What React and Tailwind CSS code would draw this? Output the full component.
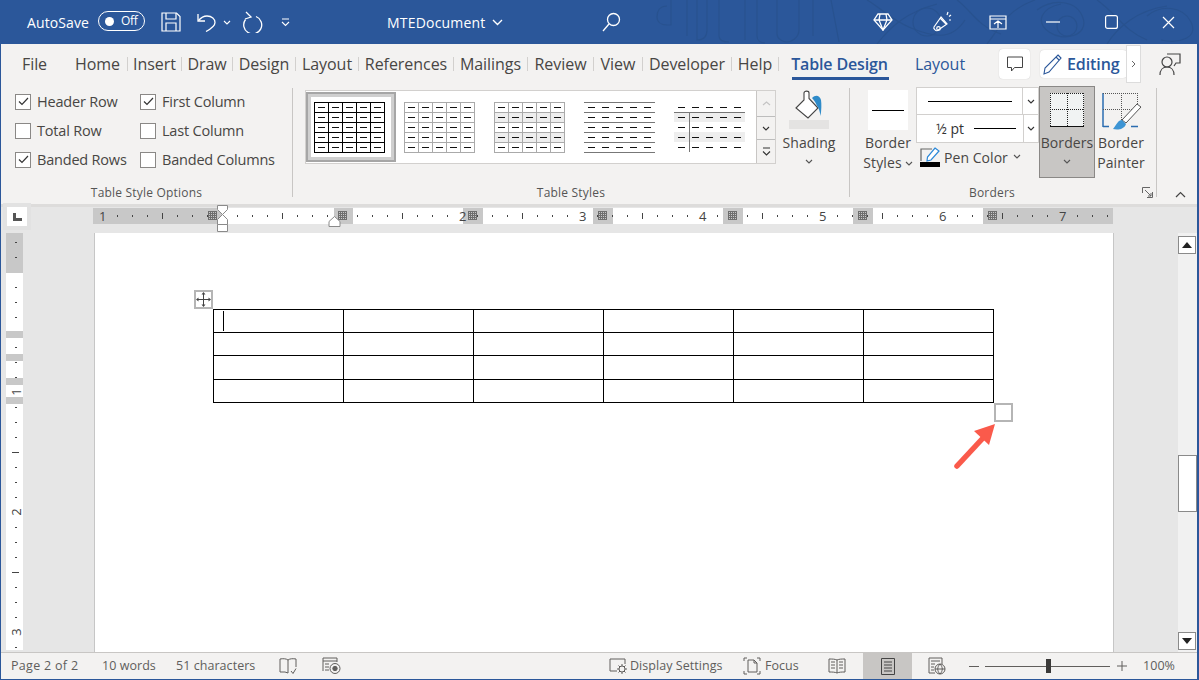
import React from "react";

const Chev = ({ c = "#555", w = 8, className = "" }) => (
  <svg width={w} height={5} viewBox="0 0 8 5" className={className}><path d="M1 1l3 3 3-3" fill="none" stroke={c} strokeWidth="1.1" /></svg>
);

function Pattern() {
  return (
    <svg className="absolute right-0 top-0" width="570" height="44" viewBox="0 0 570 44" fill="none" stroke="#28528f" strokeWidth="1.2">
      <path d="M40 6c-8 0-10 6-10 11s4 8 10 8h4V0M60 0v36M70 0v40c8 0 10-4 10-10V0M92 0v36c0 5 6 6 10 6M118 0v40M130 0v36c0 5 4 7 8 7M150 0v34c0 5 6 8 10 8s12-4 12-12V0M186 0v36M204 0l8 42" />
      <path d="M240 0c14 8 24 20 44 28s40 14 54-8M250 44c14-18 30-32 60-40M330 0c14 10 20 26 44 34M360 44c14-18 20-34 48-44M410 10c16-12 40-10 46 8s-20 24-34 14-8-24 12-28M470 0c20 14 26 30 50 40M480 44c10-16 30-34 60-38M520 16c14-12 36-10 44 6s-12 22-30 18" />
      <circle cx="300" cy="22" r="14" />
      <circle cx="440" cy="26" r="10" />
    </svg>
  );
}

function TitleBar() {
  const s = "#fff";
  return (
    <div className="relative h-[44px] shrink-0 bg-[#2b579a] flex items-center text-white overflow-hidden">
      <Pattern />
      <div className="relative flex items-center w-full h-full">
        <span className="ml-[26px] w-[71px] text-[14px] tracking-[0.1px]">AutoSave</span>
        <span className="w-[47px] h-[20px] rounded-full border border-white flex items-center mb-[2px]">
          <span className="w-[9px] h-[9px] rounded-full bg-white ml-[6px]" />
          <span className="text-[12px] ml-[7px] tracking-[-0.3px]">Off</span>
        </span>
        <svg className="ml-[16px]" width="20" height="20" viewBox="0 0 20 20" fill="none" stroke={s} strokeWidth="1.2"><path d="M1 1h14.5L19 4.5V19H1z" /><path d="M5 1v6h10V1M5 19v-8h10v8" /></svg>
        <svg className="ml-[16px]" width="21" height="20" viewBox="0 0 21 20" fill="none" stroke={s} strokeWidth="1.3"><path d="M1 2v7h7" /><path d="M1.500 8.500C4 5.500 7 4 10 4c5 0 8 3 8 6.500 0 3-2.500 5.500-9 9" /></svg>
        <Chev c="#fff" className="ml-[5px]" />
        <svg className="ml-[11px]" width="21" height="22" viewBox="0 0 21 22" fill="none" stroke={s} strokeWidth="1.3"><path d="M4 1l5 5-6 2" /><path d="M14 5.500a9 9 0 1 1-10.500 3" /></svg>
        <svg className="ml-[18px]" width="9" height="9" viewBox="0 0 9 9" fill="none" stroke={s} strokeWidth="1.1"><path d="M1 1h7M1 4l3.500 3.500L8 4" /></svg>
        <span className="ml-[97px] w-[100px] text-[14px] tracking-[0.2px] whitespace-nowrap">MTEDocument</span>
        <svg className="ml-[5px]" width="11" height="7" viewBox="0 0 11 7" fill="none" stroke={s} strokeWidth="1.4"><path d="M1 1l4.500 4.500L10 1" /></svg>
        <svg className="ml-[99px]" width="19" height="20" viewBox="0 0 19 20" fill="none" stroke={s} strokeWidth="1.3"><circle cx="11.500" cy="7.500" r="6" /><path d="M7 12L1 19" /></svg>
        <svg className="ml-[252px]" width="20" height="18" viewBox="0 0 20 18" fill="none" stroke={s} strokeWidth="1.3"><path d="M5 1h10l4 6-9 10L1 7z" /><path d="M1 7h18M7 1L6 7l4 10 4-10-1-6" /></svg>
        <svg className="ml-[39px]" width="20" height="22" viewBox="0 0 20 22" fill="none" stroke={s} strokeWidth="1.2"><path d="M9 6L2 16c-1 1.500 2 4.500 3.500 3.500L15 13z" /><circle cx="6.500" cy="17.500" r="1.800" /><path d="M8 7l6 6M16 1l-1 3M19 4l-2 1.500M19 9h-2" /></svg>
        <svg className="ml-[37px]" width="18" height="15" viewBox="0 0 18 15" fill="none" stroke={s} strokeWidth="1.2"><path d="M1 1h16v13H1zM1 4h16M5 9l4-3 4 3M9 6v7" /></svg>
        <svg className="ml-[39px]" width="14" height="2" viewBox="0 0 14 2"><path d="M0 1h14" stroke={s} strokeWidth="1.2" /></svg>
        <svg className="ml-[45px]" width="13" height="14" viewBox="0 0 13 14" fill="none" stroke={s} strokeWidth="1.2"><rect x="0.600" y="0.600" width="11.800" height="12.800" rx="2" /></svg>
        <svg className="ml-[44px]" width="13" height="13" viewBox="0 0 13 13" fill="none" stroke={s} strokeWidth="1.2"><path d="M1 1l11 11M12 1L1 12" /></svg>
      </div>
    </div>
  );
}

const tabs = [
  ["File", "w-[67px]", false], ["Home", "w-[59px]", true], ["Insert", "w-[53px]", true], ["Draw", "w-[50px]", true],
  ["Design", "w-[62px]", true], ["Layout", "w-[62px]", true], ["References", "w-[94px]", true], ["Mailings", "w-[73px]", true],
  ["Review", "w-[65px]", true], ["View", "w-[48px]", true], ["Developer", "w-[88px]", true], ["Help", "w-[46px]", true],
];

function TabBar() {
  return (
    <div className="h-[40px] shrink-0 flex items-center bg-[#f3f2f1] text-[16px] text-[#484644]">
      {tabs.map(([t, w, sep]) => (
        <React.Fragment key={t}>
          <span className={`${w} text-center tracking-[-0.05px] whitespace-nowrap`}>{t}</span>
          {sep && <span className="w-px h-[14px] bg-[#d2d0ce]" />}
        </React.Fragment>
      ))}
      <span className="relative w-[121px] h-full flex items-center justify-center text-[#2b579a] font-semibold tracking-[-0.15px] whitespace-nowrap">
        Table Design
        <span className="absolute left-[13px] top-[33px] w-[97px] h-[3px] bg-[#2b579a]" />
      </span>
      <span className="w-[80px] text-center text-[#2b579a] tracking-[-0.05px]">Layout</span>
      <span className="ml-[19px] w-[31px] h-[30px] rounded bg-white shadow-[0_0_1px_#bbb] flex items-center justify-center">
        <svg width="16" height="16" viewBox="0 0 16 16" fill="none" stroke="#444" strokeWidth="1"><path d="M.5 1h15v10.500H7.500L4.500 15v-3.500h-4z" /></svg>
      </span>
      <span className="ml-[10px] w-[87px] h-[28px] rounded bg-white shadow-[0_0_1px_#bbb] flex items-center text-[#2b579a] font-semibold tracking-[-0.1px]">
        <svg className="ml-[3px] mr-[4px]" width="20" height="22" viewBox="0 0 20 22" fill="none" stroke="#2b579a" strokeWidth="1.1"><path d="M15 2l3 3L6 19l-5 2 1-6z" /><path d="M13 4l3 3" /></svg>
        Editing
      </span>
      <span className="-ml-px w-[15px] h-[38px] bg-white border border-[#dcdcdc] flex items-center justify-center">
        <svg width="5" height="8" viewBox="0 0 5 8" fill="none" stroke="#666" strokeWidth="1"><path d="M1 1l3 3-3 3" /></svg>
      </span>
      <svg className="ml-[18px]" width="22" height="23" viewBox="0 0 22 23" fill="none" stroke="#444" strokeWidth="1.2"><circle cx="8" cy="9" r="5" /><path d="M1 22c0-5 3-8 7-8s7 3 7 8" /><path d="M8 1h13v9h-4l-2 3" /></svg>
    </div>
  );
}

function Check({ on }) {
  return (
    <span className="w-[16px] h-[16px] border border-[#8a8886] bg-white flex items-center justify-center shrink-0">
      {on && <svg width="11" height="9" viewBox="0 0 11 9" fill="none" stroke="#333" strokeWidth="1.200"><path d="M1 4.500l3 3 6-6.500" /></svg>}
    </span>
  );
}

function Opt({ on, label, w }) {
  return (
    <div className={`${w} h-[29px] flex items-center gap-[6px] text-[14.5px] tracking-[-0.2px] text-[#484644] whitespace-nowrap`}>
      <Check on={on} />
      {label}
    </div>
  );
}

function Sep() {
  return <span className="w-px h-[109px] mt-[4px] bg-[#c8c6c4] shrink-0" />;
}

const Label = ({ children, className = "" }) => (
  <div className={`absolute top-[101px] text-center text-[12px] leading-[16px] tracking-[0.2px] text-[#555] whitespace-nowrap ${className}`}>{children}</div>
);

function Thumb({ kind }) {
  const cw = 14, rh = 10, W = 70, H = 50;
  const idx = [0, 1, 2, 3, 4];
  const all = [0, 1, 2, 3, 4, 5];
  const lc = kind === 1 ? "#000" : kind === 4 || kind === 5 ? "#777" : "#aaa";
  return (
    <svg className="mr-[3px]" width={W + 1} height={H + 1} viewBox={`0 0 ${W + 1} ${H + 1}`}>
      {(kind === 3 || kind === 5) && [1, 3].map((r) => <rect key={r} x="0" y={r * rh} width={W + 1} height={rh} fill="#eeeeee" />)}
      {kind <= 3 && (
        <>
          {all.map((c) => <line key={c} x1={c * cw + 0.5} x2={c * cw + 0.5} y1="0" y2={H + 1} stroke={lc} />)}
          {all.map((r) => <line key={r} x1="0" x2={W + 1} y1={r * rh + 0.5} y2={r * rh + 0.5} stroke={lc} />)}
        </>
      )}
      {kind === 4 && all.map((r) => <line key={r} x1="0" x2={W + 1} y1={r * rh + 0.5} y2={r * rh + 0.5} stroke={lc} />)}
      {kind === 5 && (
        <>
          <line x1="0" x2={W + 1} y1={rh + 0.5} y2={rh + 0.5} stroke={lc} />
          <line x1={cw + 1.5} x2={cw + 1.5} y1={rh} y2={H} stroke={lc} />
        </>
      )}
      {idx.map((r) => idx.map((c) => (
        <line key={`${r}-${c}`} x1={c * cw + 4} x2={c * cw + 11} y1={r * rh + 5.5} y2={r * rh + 5.5} stroke="#111" />
      )))}
    </svg>
  );
}

function Gallery() {
  const ScrollBtn = ({ className, children }) => (
    <div className={`flex items-center justify-center border-[#bdbdbd] ${className}`}>{children}</div>
  );
  return (
    <div className="ml-[12px] mt-[6px] w-[471px] h-[74px] bg-white border border-[#d2d0ce] flex">
      <div className="flex items-center">
        {[1, 2, 3, 4, 5].map((k) => (
          <div key={k} className={`w-[90px] h-[70px] flex items-center justify-center ${k === 1 ? "border-2 border-[#a6a6a6] shadow-[inset_0_0_0_3px_#cfcfcf]" : ""}`}>
            <Thumb kind={k} />
          </div>
        ))}
      </div>
      <div className="ml-auto w-[19px] flex flex-col bg-[#f3f2f1] border-l border-[#c8c6c4]">
        <ScrollBtn className="h-[26px] border-b"><svg width="9" height="5" viewBox="0 0 9 5" fill="none" stroke="#c4c4c4" strokeWidth="1.200"><path d="M1 4l3.500-3L8 4" /></svg></ScrollBtn>
        <ScrollBtn className="h-[23px] border-b"><Chev c="#333" /></ScrollBtn>
        <ScrollBtn className="flex-1"><svg width="9" height="9" viewBox="0 0 9 9" fill="none" stroke="#333" strokeWidth="1.100"><path d="M1 1h7M1 4.500l3.500 3.500L8 4.500" /></svg></ScrollBtn>
      </div>
    </div>
  );
}

const Word = ({ children }) => <div className="h-[20px] leading-[20px] text-[14px] tracking-[0.1px] text-[#484644] text-center whitespace-nowrap">{children}</div>;

function Ribbon() {
  return (
    <div className="h-[120px] shrink-0 bg-[#f3f2f1] flex">
      <div className="relative w-[291px] shrink-0 pl-[14px] pt-[3px]">
        <div className="flex flex-wrap">
          <Opt on label="Header Row" w="w-[125px]" /><Opt on label="First Column" w="w-[150px]" />
          <Opt label="Total Row" w="w-[125px]" /><Opt label="Last Column" w="w-[150px]" />
          <Opt on label="Banded Rows" w="w-[125px]" /><Opt label="Banded Columns" w="w-[150px]" />
        </div>
        <Label className="left-0 w-[291px]">Table Style Options</Label>
      </div>
      <Sep />
      <div className="relative w-[556px] shrink-0 flex">
        <Gallery />
        <div className="w-[60px] ml-[3px] mt-[6px] flex flex-col items-center">
          <svg width="32" height="29" viewBox="0 0 32 29" fill="none">
            <path d="M3 18l8-8V3c0-2.500 5-2.500 5 0v5.500L25 18 15 28z" fill="#fff" stroke="#444" strokeWidth="1.100" />
            <path d="M19 8c4-4 8-2 9 2 .6 4 .5 10-.5 16-.6-4-1.500-8-3.500-10-1-3-2.500-5-5-8z" fill="#2e8bc9" />
          </svg>
          <div className="w-[40px] h-[9px] mt-[1px] bg-[#e4e3e2]" />
          <div className="mt-[4px]"><Word>Shading</Word></div>
          <Chev className="mt-[6px]" />
        </div>
        <Label className="left-[243px] w-[70px]">Table Styles</Label>
      </div>
      <Sep />
      <div className="relative w-[306px] shrink-0 flex">
        <div className="ml-[12px] w-[52px] mt-[6px] flex flex-col items-center">
          <div className="w-[40px] h-[40px] bg-white flex items-center justify-center"><span className="w-[32px] h-px bg-black" /></div>
          <div className="mt-[3px]"><Word>Border</Word></div>
          <div className="flex items-center h-[20px] gap-[3px]"><Word>Styles</Word><Chev /></div>
        </div>
        <div className="ml-[2px] w-[123px] mt-[3px] flex flex-col">
          <div className="h-[28px] bg-white border border-[#d2d0ce] flex items-center">
            <span className="ml-[11px] w-[84px] h-px bg-black" />
            <span className="ml-[10px] w-px h-full bg-[#d2d0ce]" />
            <span className="flex-1 flex justify-center"><Chev c="#333" /></span>
          </div>
          <div className="h-[28px] bg-white border-x border-b border-[#d2d0ce] flex items-center">
            <span className="ml-[19px] w-[37px] text-[14px] text-[#333] whitespace-nowrap">½ pt</span>
            <span className="ml-[1px] w-[42px] h-px bg-black" />
            <span className="ml-[7px] w-px h-full bg-[#d2d0ce]" />
            <span className="flex-1 flex justify-center"><Chev c="#333" /></span>
          </div>
          <div className="h-[28px] flex items-center pl-[4px]">
            <svg width="20" height="20" viewBox="0 0 20 20" fill="none"><path d="M1 14V2h11" stroke="#666" strokeWidth="1.200" /><path d="M15 1l4 3-8 9-4 1 .5-4z" fill="#fff" stroke="#2b88d8" strokeWidth="1.200" /><rect x="0" y="15" width="20" height="5" fill="#000" /></svg>
            <span className="ml-[4px] text-[14px] tracking-[0.05px] text-[#484644] whitespace-nowrap">Pen Color</span>
            <Chev className="ml-[5px] mb-[2px]" />
          </div>
        </div>
        <div className="w-[56px] h-[92px] mt-[2px] bg-[#c8c6c4] border border-[#8a8886] flex flex-col items-center">
          <svg className="mt-[5px]" width="36" height="36" viewBox="0 0 36 36" fill="#f1f3f3">
            <rect x="1" y="1" width="34" height="33" />
            <g fill="none" stroke="#222" strokeWidth="1" strokeDasharray="1 1">
              <path d="M1 1.500h34M1 17.500h34M1.500 1v33M18.500 1v33M34.500 1v33" />
            </g>
            <path d="M1 34.500h34" stroke="#111" strokeWidth="1.200" />
          </svg>
          <div className="mt-[5px]"><Word>Borders</Word></div>
          <Chev className="mt-[6px]" />
        </div>
        <div className="w-[52px] mt-[8px] flex flex-col items-center">
          <svg width="44" height="38" viewBox="0 0 44 38" fill="none">
            <path d="M4 35V1" stroke="#2b6cb0" strokeWidth="1.500" />
            <path d="M4 34.500h6M32 34.500h7" stroke="#2b6cb0" strokeWidth="1.500" />
            <g stroke="#555" strokeDasharray="1 1"><path d="M4 1.500h35M4 17.500h30M22.500 1v27M38.500 1v13" /></g>
            <path d="M42 15L27 31l-4-3 15-16z" fill="#fff" stroke="#555" />
            <path d="M23 28c-4 0-5 4-9 9 4 1 11 1 13-5z" fill="#3e95d4" />
          </svg>
          <div className="mt-[3px]"><Word>Border</Word></div>
          <Word>Painter</Word>
        </div>
        <Label className="left-[107px] w-[70px]">Borders</Label>
        <svg className="absolute left-[292px] top-[103px]" width="11" height="11" viewBox="0 0 11 11" fill="none" stroke="#666"><path d="M10.500 5v5.500H5M.5 6V.5H8M3 3l6 6M6 9h3V6" /></svg>
      </div>
      <Sep />
      <svg className="ml-[18px] mt-[107px]" width="11" height="7" viewBox="0 0 11 7" fill="none" stroke="#444" strokeWidth="1.200"><path d="M1 6l4.500-4.500L10 6" /></svg>
    </div>
  );
}

function GridMark({ className = "" }) {
  const a = [0, 2, 4, 6, 8];
  return (
    <svg className={className} width="9" height="9" viewBox="0 0 9 9" stroke="#6e6e6e" strokeWidth="1">
      {a.map((v) => <line key={`h${v}`} x1="0" x2="9" y1={v + 0.5} y2={v + 0.5} />)}
      {a.map((v) => <line key={`v${v}`} y1="0" y2="9" x1={v + 0.5} x2={v + 0.5} />)}
    </svg>
  );
}

const rulerSegs = [
  [129, 1], [112, 0], [19, 1], [110, 0], [20, 1], [110, 0], [20, 1], [110, 0], [20, 1], [110, 0], [20, 1], [110, 0], [130, 1],
];

function HRuler() {
  const ticks = [];
  for (let k = -8; k <= 59; k++) {
    if (k % 8 === 0) continue;
    const x = 129 + 15 * k;
    if (x < 0 || x > 1020) continue;
    ticks.push(<line key={k} x1={x + 0.5} x2={x + 0.5} y1={k % 4 === 0 ? 5 : 7} y2={k % 4 === 0 ? 11 : 9} stroke="#444" />);
  }
  const nums = [[1, "left-[6px]"], [2, "left-[366px]"], [3, "left-[486px]"], [4, "left-[606px]"], [5, "left-[726px]"], [6, "left-[846px]"], [7, "left-[966px]"]];
  const marks = ["left-[115px]", "left-[245px]", "left-[375px]", "left-[505px]", "left-[635px]", "left-[765px]", "left-[895px]"];
  return (
    <div className="relative ml-[62px] mt-px w-[1020px] h-[16px] flex">
      {rulerSegs.map(([w, g], i) => (
        <div key={i} style={{ width: w }} className={g ? "h-full bg-[#c8c8c8]" : "h-full bg-white"} />
      ))}
      <svg className="absolute left-0 top-0" width="1020" height="16">{ticks}</svg>
      {nums.map(([n, l]) => <span key={n} className={`absolute ${l} top-0 text-[13px] leading-[16px] text-[#444]`}>{n}</span>)}
      {marks.map((l) => <GridMark key={l} className={`absolute ${l} top-[3px]`} />)}
      <svg className="absolute left-[123px] top-[-3px]" width="13" height="28" viewBox="0 0 13 28" fill="none" stroke="#8a8a8a">
        <path d="M1.500.5h10v4l-5 5-5-5z" fill="#fff" />
        <path d="M6.500 9.500l5 5v5h-10v-5z" fill="#fff" />
        <path d="M1.500 19.500h10v7h-10z" fill="#fff" />
      </svg>
      <svg className="absolute left-[235px] top-[8px]" width="13" height="11" viewBox="0 0 13 11" fill="#fff" stroke="#8a8a8a"><path d="M6.500.5l5.500 5v5H1v-5z" /></svg>
    </div>
  );
}

const vSegs = [[40, 1], [58, 0], [7, 1], [16, 0], [7, 1], [17, 0], [7, 1], [12, 0], [7, 1], [246, 0]];

function VRuler() {
  const ticks = [];
  for (let k = -2; k <= 28; k++) {
    if (k % 8 === 0 || k === 4) continue;
    const y = 39 + 15 * k;
    if (y < 0 || y > 417) continue;
    const long = k % 4 === 0;
    ticks.push(<line key={k} y1={y + 0.5} y2={y + 0.5} x1={long ? 6 : 9} x2={long ? 13 : 11} stroke="#444" />);
  }
  const nums = [["1", "top-[151px]"], ["2", "top-[271px]"], ["3", "top-[391px]"]];
  return (
    <div className="relative ml-[5px] w-[17px] h-[417px] flex flex-col">
      {vSegs.map(([h, g], i) => (
        <div key={i} style={{ height: h }} className={g ? "w-full bg-[#c8c8c8]" : "w-full bg-white"} />
      ))}
      <svg className="absolute left-0 top-0" width="17" height="417">{ticks}</svg>
      {nums.map(([n, t]) => <span key={n} className={`absolute left-[5px] ${t} w-[9px] text-center text-[13px] leading-[16px] text-[#444] -rotate-90`}>{n}</span>)}
    </div>
  );
}

function DocTable() {
  const cols = [0, 1, 2, 3, 4, 5];
  const rows = ["h-[23px]", "h-[23px]", "h-[24px]", "h-[23px]"];
  return (
    <table className="border-collapse table-fixed w-[781px] border border-black">
      <tbody>
        {rows.map((h, r) => (
          <tr key={r} className={h}>
            {cols.map((c) => (
              <td key={c} className="border border-black w-[130px] p-0 align-middle">
                {r === 0 && c === 0 && <span className="block w-px h-[20px] ml-[9px] bg-black" />}
              </td>
            ))}
          </tr>
        ))}
      </tbody>
    </table>
  );
}

function Page() {
  return (
    <div className="w-[1020px] shrink-0 h-full bg-white border-x border-[#c6c6c6] pl-[118px] pt-[76px]">
      <div className="relative w-[781px]">
        <DocTable />
        <div className="absolute left-[-19px] top-[-19px] w-[19px] h-[19px] bg-white border-2 border-[#b5b5b5] flex items-center justify-center">
          <svg width="15" height="15" viewBox="0 0 15 15" fill="#444" stroke="#444"><path d="M7.500 1v13M1 7.500h13" fill="none" /><path d="M7.500 0l2 2.500h-4zM7.500 15l2-2.500h-4zM0 7.500l2.500-2v4zM15 7.500l-2.500-2v4z" stroke="none" /></svg>
        </div>
        <div className="absolute left-[781px] top-[94px] w-[19px] h-[19px] bg-white border-2 border-[#b5b5b5]" />
        <svg className="absolute left-[740px] top-[112px]" width="50" height="52" viewBox="0 0 50 52" fill="none">
          <path d="M4 45L30 17" stroke="#fa5a4b" strokeWidth="5.500" strokeLinecap="round" />
          <path d="M42 3L21 10l15 14z" fill="#fa5a4b" />
        </svg>
      </div>
    </div>
  );
}

function Scrollbar() {
  const Btn = ({ children }) => (
    <div className="w-[18px] h-[18px] bg-white border border-[#8a8a8a] flex items-center justify-center">{children}</div>
  );
  return (
    <div className="ml-[64px] w-[19px] h-full bg-[#f1f1f1] flex flex-col pt-[3px] pb-[2px]">
      <Btn><svg width="10" height="6" viewBox="0 0 10 6"><path d="M5 0l5 6H0z" fill="#222" /></svg></Btn>
      <div className="mt-[201px] w-[19px] h-[57px] bg-white border border-[#8a8a8a]" />
      <div className="mt-auto"><Btn><svg width="10" height="6" viewBox="0 0 10 6"><path d="M5 6l5-6H0z" fill="#222" /></svg></Btn></div>
    </div>
  );
}

function Workspace() {
  return (
    <div className="flex-1 min-h-0 bg-[#e6e6e6] flex flex-col">
      <div className="h-[26px] shrink-0 flex">
        <div className="ml-[2px] mt-[-4px] w-[28px] h-[27px] bg-[#e2e2e2] flex items-center justify-center">
          <div className="w-[20px] h-[19px] bg-white flex items-center justify-center">
            <svg width="9" height="8" viewBox="0 0 9 8" fill="#555"><path d="M0 0h3v5h6v3H0z" /></svg>
          </div>
        </div>
        <HRuler />
      </div>
      <div className="flex-1 min-h-0 flex">
        <div className="w-[93px] shrink-0"><VRuler /></div>
        <Page />
        <Scrollbar />
      </div>
    </div>
  );
}

function StatusBar() {
  const txt = "text-[12.5px] tracking-[0.05px] text-[#605e5c] whitespace-nowrap";
  const st = "#605e5c";
  return (
    <div className={`h-[27px] shrink-0 bg-[#f3f2f1] border-t border-[#c8c6c4] flex items-center ${txt}`}>
      <span className="ml-[10px] w-[91px] tracking-[0.3px]">Page 2 of 2</span>
      <span className="w-[74px]">10 words</span>
      <span className="w-[103px]">51 characters</span>
      <svg width="18" height="18" viewBox="0 0 18 18" fill="none" stroke={st}><path d="M9 3C7 1.500 4 1.500 1 2v13h5l3 1V3c2-1.500 5-1.500 8-1v8M12 14l2 2.500 3-5" /></svg>
      <svg className="ml-[25px]" width="19" height="18" viewBox="0 0 19 18" fill="none" stroke={st}><path d="M1 14V1h14v4M1 4h14M3 7h4M3 10h4M3 13h4" /><circle cx="13" cy="11.500" r="5" /><circle cx="13" cy="11.500" r="2.200" fill={st} /></svg>
      <svg className="ml-[268px]" width="20" height="18" viewBox="0 0 20 18" fill="none" stroke={st}><path d="M8 14H1V2h15v5" /><circle cx="13" cy="12" r="3" /><path d="M13 7v2M13 15v2M8 12h2M16 12h2M9.500 8.500l1.500 1.500M15 14l1.500 1.500M9.500 15.500L11 14M15 10l1.500-1.500" /></svg>
      <span className="ml-[1px] w-[113px]">Display Settings</span>
      <svg width="18" height="18" viewBox="0 0 18 18" fill="none" stroke={st}><path d="M1 4V1h3M14 1h3v3M1 14v3h3M14 17h3v-3M5 3h6l3 3v9H5zM11 3v3h3" /></svg>
      <span className="ml-[4px] w-[63px]">Focus</span>
      <svg width="18" height="16" viewBox="0 0 18 16" fill="none" stroke={st}><path d="M9 2C7 1 4 1 1 1v13c3 0 6 0 8 1 2-1 5-1 8-1V1c-3 0-6 0-8 1zM9 2v13M3 4h4M3 7h4M3 10h4M11 4h4M11 7h4M11 10h4" /></svg>
      <div className="ml-[17px] w-[49px] h-full bg-[#c8c6c4] flex items-center justify-center">
        <svg width="14" height="17" viewBox="0 0 14 17" fill="none" stroke="#444"><path d="M.5.5h13v16H.5zM3 4h8M3 7h8M3 10h8M3 13h8" /></svg>
      </div>
      <svg className="ml-[16px]" width="18" height="18" viewBox="0 0 18 18" fill="none" stroke={st}><path d="M7 16H1V1h13v6M3 4h9M3 7h4M3 10h3M3 13h3" /><circle cx="12" cy="12" r="5" /><path d="M7 12h10M12 7c-3 3-3 7 0 10M12 7c3 3 3 7 0 10" /></svg>
      <span className="ml-[23px] w-[10px] h-px bg-[#605e5c]" />
      <div className="relative ml-[6px] w-[125px] h-px bg-[#605e5c]">
        <span className="absolute left-[61px] top-[-7px] w-[5px] h-[14px] bg-[#3b3a39]" />
      </div>
      <svg className="ml-[7px]" width="10" height="10" viewBox="0 0 10 10" stroke={st}><path d="M5 0v10M0 5h10" /></svg>
      <span className="ml-[16px]">100%</span>
    </div>
  );
}

export default function App() {
  return (
    <div className="w-[1199px] h-[680px] overflow-hidden flex flex-col border-l border-r-2 border-b border-[#2b579a] bg-[#f3f2f1] font-['Open_Sans',sans-serif]">
      <TitleBar />
      <TabBar />
      <Ribbon />
      <div className="h-[3px] shrink-0 bg-[#dddcdb]" />
      <Workspace />
      <StatusBar />
    </div>
  );
}
